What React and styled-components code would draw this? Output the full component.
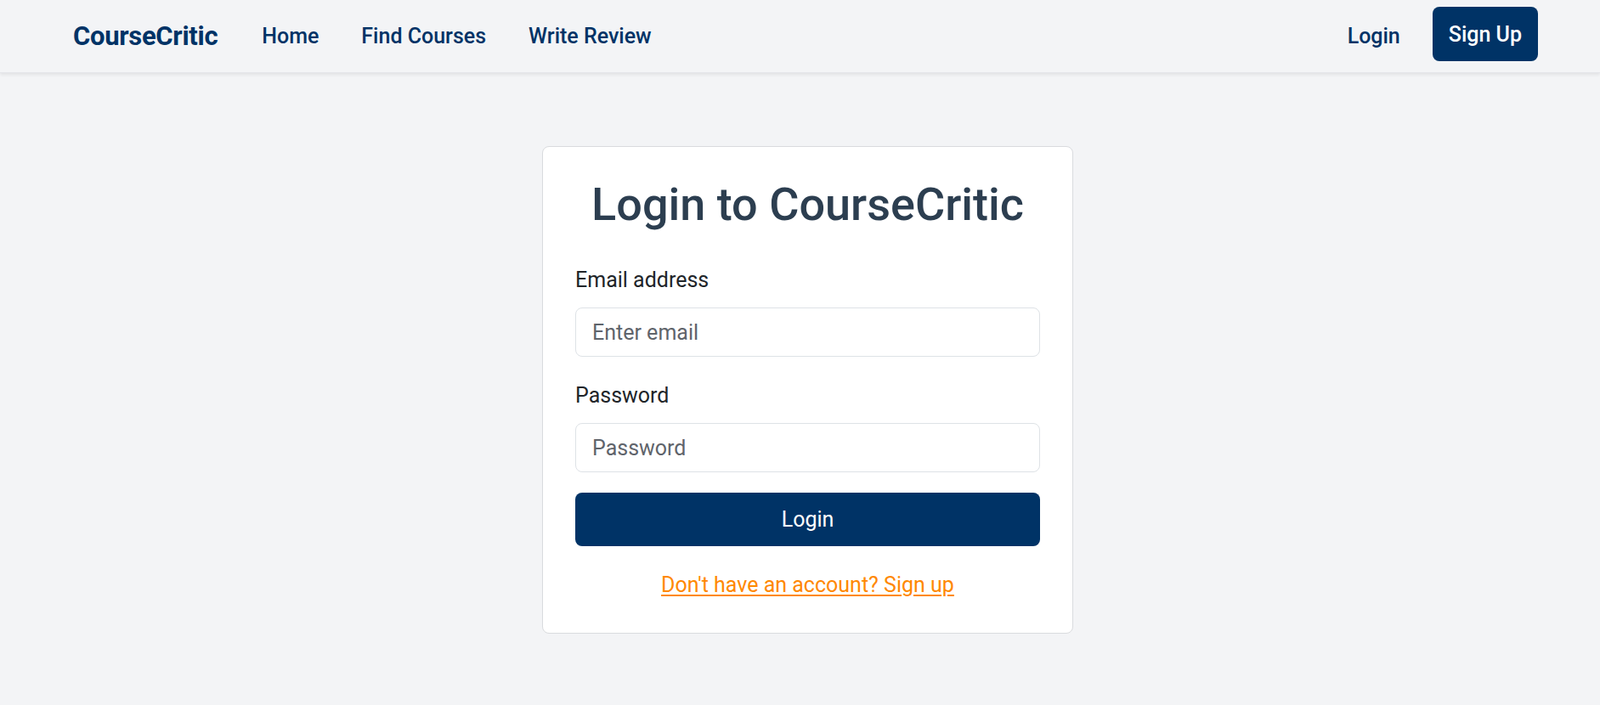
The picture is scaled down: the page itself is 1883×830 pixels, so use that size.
import React from "react";
import styled, { createGlobalStyle } from "styled-components";

const GlobalStyle = createGlobalStyle`
  * { box-sizing: border-box; }
  html, body { margin: 0; padding: 0; }
  body {
    background: #f3f4f6;
    font-family: Roboto, "Liberation Sans", Arial, sans-serif;
    color: #212529;
    font-size: 25px;
    line-height: 36px;
  }
`;

const Page = styled.div`
  min-height: 830px;
  background: #f3f4f6;
`;

const NavBar = styled.nav`
  height: 86px;
  display: flex;
  align-items: center;
  justify-content: space-between;
  padding: 0 73px 0 86px;
  background: #f3f4f6;
  box-shadow: 0 2px 4px rgba(0, 0, 0, 0.08);
  border-bottom: 1px solid #e4e6ea;
`;

const NavLeft = styled.div`
  display: flex;
  align-items: center;
`;

const Brand = styled.a`
  font-size: 31px;
  font-weight: 700;
  color: #003366;
  letter-spacing: -0.3px;
  text-decoration: none;
  margin-right: 27px;
`;

const NavLink = styled.a`
  font-size: 25px;
  font-weight: 500;
  color: #003366;
  text-decoration: none;
  padding: 0 ${(p) => (p.$tight ? 0 : 25)}px;
`;

const NavRight = styled.div`
  display: flex;
  align-items: center;
  gap: 38px;
`;

const SignUpButton = styled.button`
  height: 64px;
  padding: 0 19px;
  background: #003366;
  color: #fff;
  border: none;
  border-radius: 8px;
  font-family: inherit;
  font-size: 25px;
  font-weight: 500;
  cursor: pointer;
  margin-bottom: 5px;
`;

const Main = styled.main`
  display: flex;
  justify-content: center;
  padding: 86px 0 0 18px;
`;

const Card = styled.div`
  width: 625px;
  background: #fff;
  border: 1px solid #d9dbde;
  border-radius: 8px;
  padding: 35px 38px 38px;
`;

const Title = styled.h1`
  margin: 0 0 38px;
  text-align: center;
  font-size: 54px;
  font-weight: 500;
  line-height: 66px;
  color: #2c3e50;
`;

const Field = styled.div`
  margin-bottom: ${(p) => p.$mb}px;
`;

const Label = styled.label`
  display: block;
  font-size: 25px;
  line-height: 36px;
  color: #212529;
  margin-bottom: 14px;
`;

const Input = styled.input`
  display: block;
  width: 100%;
  height: 58px;
  padding: 0 19px;
  font-family: inherit;
  font-size: 25px;
  color: #212529;
  background: #fff;
  border: 1px solid #dee2e6;
  border-radius: 8px;
  outline: none;
  &::placeholder { color: #5f646b; }
`;

const SubmitButton = styled.button`
  display: block;
  width: 100%;
  height: 63px;
  background: #003366;
  color: #fff;
  border: none;
  border-radius: 8px;
  font-family: inherit;
  font-size: 25px;
  font-weight: 400;
  cursor: pointer;
`;

const Footer = styled.p`
  margin: 28px 0 0;
  text-align: center;
  line-height: 36px;
`;

const SignUpLink = styled.a`
  color: #ff8800;
  font-size: 25px;
  text-decoration: underline;
  text-underline-offset: 3px;
`;

export default function App() {
  return (
    <Page>
      <GlobalStyle />
      <NavBar>
        <NavLeft>
          <Brand href="#">CourseCritic</Brand>
          <NavLink href="#">Home</NavLink>
          <NavLink href="#">Find Courses</NavLink>
          <NavLink href="#">Write Review</NavLink>
        </NavLeft>
        <NavRight>
          <NavLink href="#" $tight>Login</NavLink>
          <SignUpButton>Sign Up</SignUpButton>
        </NavRight>
      </NavBar>
      <Main>
        <Card>
          <Title>Login to CourseCritic</Title>
          <Field $mb={28}>
            <Label htmlFor="email">Email address</Label>
            <Input id="email" type="email" placeholder="Enter email" />
          </Field>
          <Field $mb={24}>
            <Label htmlFor="password">Password</Label>
            <Input id="password" type="password" placeholder="Password" />
          </Field>
          <SubmitButton>Login</SubmitButton>
          <Footer>
            <SignUpLink href="#">Don't have an account? Sign up</SignUpLink>
          </Footer>
        </Card>
      </Main>
    </Page>
  );
}
